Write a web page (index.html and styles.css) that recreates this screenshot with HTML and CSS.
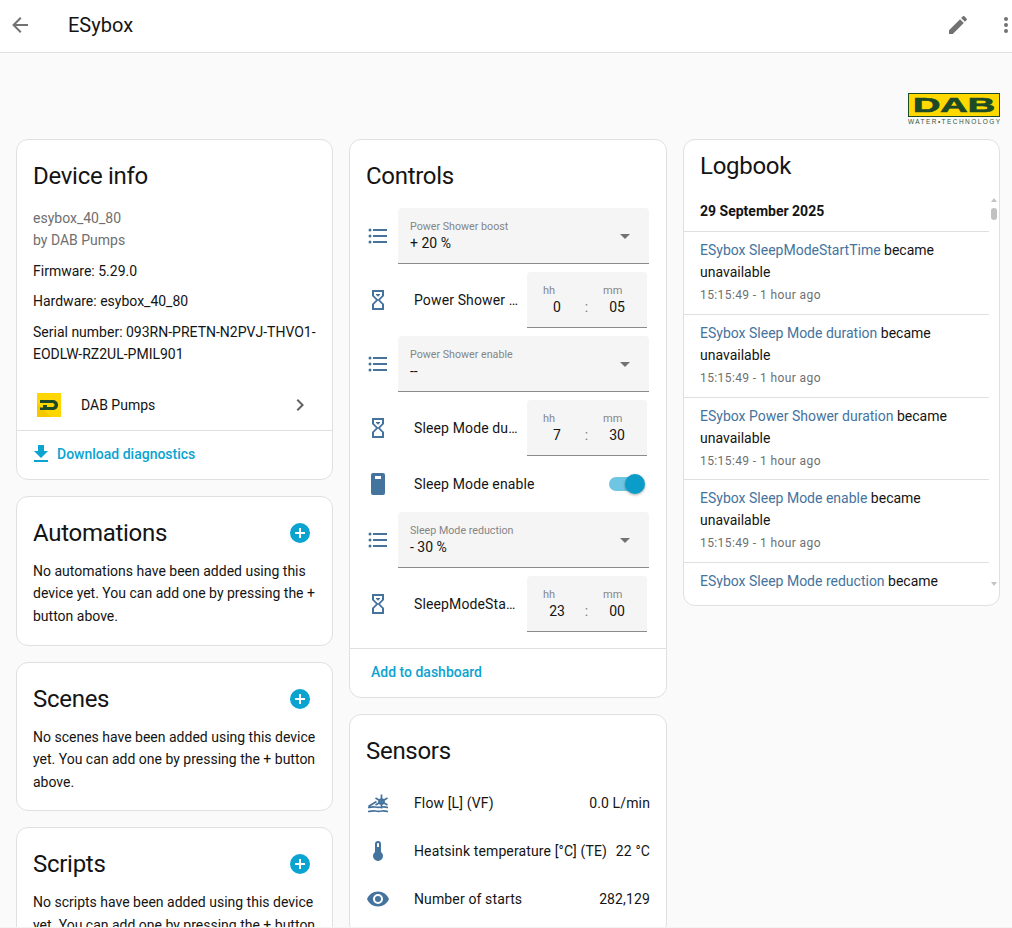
FILE: index.html
```html
<!DOCTYPE html>
<html lang="en">
<head>
  <meta charset="UTF-8">
  <title>ESybox</title>
  <link rel="stylesheet" href="styles.css">
</head>
<body>
  <header class="topbar">
    <svg class="top-icon back" viewBox="0 0 24 24"><path d="M20,11V13H8L13.5,18.5L12.08,19.92L4.16,12L12.08,4.08L13.5,5.5L8,11H20Z"/></svg>
    <h1>ESybox</h1>
    <svg class="top-icon edit" viewBox="0 0 24 24"><path d="M20.71,7.04C21.1,6.65 21.1,6 20.71,5.63L18.37,3.29C18,2.9 17.35,2.9 16.96,3.29L15.12,5.12L18.87,8.87M3,17.25V21H6.75L17.81,9.93L14.06,6.18L3,17.25Z"/></svg>
    <svg class="top-icon more" viewBox="0 0 24 24"><path d="M12,16A2,2 0 0,1 14,18A2,2 0 0,1 12,20A2,2 0 0,1 10,18A2,2 0 0,1 12,16M12,10A2,2 0 0,1 14,12A2,2 0 0,1 12,14A2,2 0 0,1 10,12A2,2 0 0,1 12,10M12,4A2,2 0 0,1 14,6A2,2 0 0,1 12,8A2,2 0 0,1 10,6A2,2 0 0,1 12,4Z"/></svg>
  </header>

  <div class="logo-row">
    <svg class="dab-logo" viewBox="0 0 92 31">
      <rect x="0.5" y="0.5" width="91" height="23" fill="#ffd800" stroke="#1d4a26"/>
      <text class="dab-word" x="46" y="19" text-anchor="middle" textLength="82" lengthAdjust="spacingAndGlyphs">DAB</text>
      <text class="dab-sub" x="0" y="30.5" textLength="92">WATER•TECHNOLOGY</text>
    </svg>
  </div>

  <main class="columns">
    <div class="column">
      <section class="card">
        <h2 class="card-title">Device info</h2>
        <div class="device-details">
          <div class="muted">esybox_40_80</div>
          <div class="muted">by DAB Pumps</div>
          <div class="detail">Firmware: 5.29.0</div>
          <div class="detail">Hardware: esybox_40_80</div>
          <div class="detail">Serial number: 093RN-PRETN-N2PVJ-THVO1-EODLW-RZ2UL-PMIL901</div>
        </div>
        <div class="brand-row">
          <span class="brand-logo"><svg viewBox="0 0 24 24"><path class="brand-shade" d="M0,10L14,24H0Z"/><path d="M3,7H15C19,7 21,9 21,12C21,15 19,17 15,17H3V14.5H6V12H10V14H14.5C16.5,14 17.5,13.4 17.5,12C17.5,10.6 16.5,10 14.5,10H3Z"/></svg></span>
          <span class="brand-name">DAB Pumps</span>
          <svg class="chevron" viewBox="0 0 24 24"><path d="M8.59,16.58L13.17,12L8.59,7.41L10,6L16,12L10,18L8.59,16.58Z"/></svg>
        </div>
        <div class="card-actions">
          <a class="link download"><svg viewBox="0 0 24 24"><path d="M5,20H19V18H5M19,9H15V3H9V9H5L12,16L19,9Z"/></svg>Download diagnostics</a>
        </div>
      </section>

      <section class="card">
        <div class="title-row">
          <h2 class="card-title">Automations</h2>
          <svg class="add" viewBox="0 0 24 24"><path d="M17,13H13V17H11V13H7V11H11V7H13V11H17M12,2A10,10 0 0,0 2,12A10,10 0 0,0 12,22A10,10 0 0,0 22,12A10,10 0 0,0 12,2Z"/></svg>
        </div>
        <p class="empty">No automations have been added using this device yet. You can add one by pressing the + button above.</p>
      </section>

      <section class="card">
        <div class="title-row">
          <h2 class="card-title">Scenes</h2>
          <svg class="add" viewBox="0 0 24 24"><path d="M17,13H13V17H11V13H7V11H11V7H13V11H17M12,2A10,10 0 0,0 2,12A10,10 0 0,0 12,22A10,10 0 0,0 22,12A10,10 0 0,0 12,2Z"/></svg>
        </div>
        <p class="empty">No scenes have been added using this device yet. You can add one by pressing the + button above.</p>
      </section>

      <section class="card">
        <div class="title-row">
          <h2 class="card-title">Scripts</h2>
          <svg class="add" viewBox="0 0 24 24"><path d="M17,13H13V17H11V13H7V11H11V7H13V11H17M12,2A10,10 0 0,0 2,12A10,10 0 0,0 12,22A10,10 0 0,0 22,12A10,10 0 0,0 12,2Z"/></svg>
        </div>
        <p class="empty">No scripts have been added using this device yet. You can add one by pressing the + button above.</p>
      </section>
    </div>

    <div class="column">
      <section class="card">
        <h2 class="card-title">Controls</h2>
        <div class="entities">
          <div class="entity">
            <svg class="state-icon" viewBox="0 0 24 24"><path d="M7,5H21V7H7V5M7,13V11H21V13H7M4,4.5A1.5,1.5 0 0,1 5.5,6A1.5,1.5 0 0,1 4,7.5A1.5,1.5 0 0,1 2.5,6A1.5,1.5 0 0,1 4,4.5M4,10.5A1.5,1.5 0 0,1 5.5,12A1.5,1.5 0 0,1 4,13.5A1.5,1.5 0 0,1 2.5,12A1.5,1.5 0 0,1 4,10.5M7,19V17H21V19H7M4,16.5A1.5,1.5 0 0,1 5.5,18A1.5,1.5 0 0,1 4,19.5A1.5,1.5 0 0,1 2.5,18A1.5,1.5 0 0,1 4,16.5Z"/></svg>
            <div class="select">
              <div>
                <div class="select-label">Power Shower boost</div>
                <div class="select-value">+ 20 %</div>
              </div>
              <svg class="arrow" viewBox="0 0 24 24"><path d="M7,10L12,15L17,10H7Z"/></svg>
            </div>
          </div>
          <div class="entity">
            <svg class="state-icon" viewBox="0 0 24 24"><path d="M6,2H18V8L14,12L18,16V22H6V16L10,12L6,8V2M16,16.5L12,12.5L8,16.5V20H16V16.5M12,11.5L16,7.5V4H8V7.5L12,11.5M10,6H14V6.75L12,8.75L10,6.75V6Z"/></svg>
            <span class="entity-name">Power Shower duration</span>
            <div class="time-box">
              <div class="time-field"><label>hh</label><span>0</span></div>
              <span class="time-colon">:</span>
              <div class="time-field"><label>mm</label><span>05</span></div>
            </div>
          </div>
          <div class="entity">
            <svg class="state-icon" viewBox="0 0 24 24"><path d="M7,5H21V7H7V5M7,13V11H21V13H7M4,4.5A1.5,1.5 0 0,1 5.5,6A1.5,1.5 0 0,1 4,7.5A1.5,1.5 0 0,1 2.5,6A1.5,1.5 0 0,1 4,4.5M4,10.5A1.5,1.5 0 0,1 5.5,12A1.5,1.5 0 0,1 4,13.5A1.5,1.5 0 0,1 2.5,12A1.5,1.5 0 0,1 4,10.5M7,19V17H21V19H7M4,16.5A1.5,1.5 0 0,1 5.5,18A1.5,1.5 0 0,1 4,19.5A1.5,1.5 0 0,1 2.5,18A1.5,1.5 0 0,1 4,16.5Z"/></svg>
            <div class="select">
              <div>
                <div class="select-label">Power Shower enable</div>
                <div class="select-value">--</div>
              </div>
              <svg class="arrow" viewBox="0 0 24 24"><path d="M7,10L12,15L17,10H7Z"/></svg>
            </div>
          </div>
          <div class="entity">
            <svg class="state-icon" viewBox="0 0 24 24"><path d="M6,2H18V8L14,12L18,16V22H6V16L10,12L6,8V2M16,16.5L12,12.5L8,16.5V20H16V16.5M12,11.5L16,7.5V4H8V7.5L12,11.5M10,6H14V6.75L12,8.75L10,6.75V6Z"/></svg>
            <span class="entity-name">Sleep Mode duration</span>
            <div class="time-box">
              <div class="time-field"><label>hh</label><span>7</span></div>
              <span class="time-colon">:</span>
              <div class="time-field"><label>mm</label><span>30</span></div>
            </div>
          </div>
          <div class="entity entity-short">
            <svg class="state-icon" viewBox="0 0 24 24"><path d="M7,1H17A2,2 0 0,1 19,3V21A2,2 0 0,1 17,23H7A2,2 0 0,1 5,21V3A2,2 0 0,1 7,1M9,4V7H15V4H9Z"/></svg>
            <span class="entity-name">Sleep Mode enable</span>
            <span class="switch"><span class="switch-thumb"></span></span>
          </div>
          <div class="entity">
            <svg class="state-icon" viewBox="0 0 24 24"><path d="M7,5H21V7H7V5M7,13V11H21V13H7M4,4.5A1.5,1.5 0 0,1 5.5,6A1.5,1.5 0 0,1 4,7.5A1.5,1.5 0 0,1 2.5,6A1.5,1.5 0 0,1 4,4.5M4,10.5A1.5,1.5 0 0,1 5.5,12A1.5,1.5 0 0,1 4,13.5A1.5,1.5 0 0,1 2.5,12A1.5,1.5 0 0,1 4,10.5M7,19V17H21V19H7M4,16.5A1.5,1.5 0 0,1 5.5,18A1.5,1.5 0 0,1 4,19.5A1.5,1.5 0 0,1 2.5,18A1.5,1.5 0 0,1 4,16.5Z"/></svg>
            <div class="select">
              <div>
                <div class="select-label">Sleep Mode reduction</div>
                <div class="select-value">- 30 %</div>
              </div>
              <svg class="arrow" viewBox="0 0 24 24"><path d="M7,10L12,15L17,10H7Z"/></svg>
            </div>
          </div>
          <div class="entity">
            <svg class="state-icon" viewBox="0 0 24 24"><path d="M6,2H18V8L14,12L18,16V22H6V16L10,12L6,8V2M16,16.5L12,12.5L8,16.5V20H16V16.5M12,11.5L16,7.5V4H8V7.5L12,11.5M10,6H14V6.75L12,8.75L10,6.75V6Z"/></svg>
            <span class="entity-name">SleepModeStartTime</span>
            <div class="time-box">
              <div class="time-field"><label>hh</label><span>23</span></div>
              <span class="time-colon">:</span>
              <div class="time-field"><label>mm</label><span>00</span></div>
            </div>
          </div>
        </div>
        <div class="card-actions">
          <a class="link">Add to dashboard</a>
        </div>
      </section>

      <section class="card">
        <h2 class="card-title">Sensors</h2>
        <div class="entities">
          <div class="entity entity-short">
            <svg class="state-icon flow-icon" viewBox="0 0 24 24"><circle cx="15.5" cy="10.5" r="2.5"/><path d="M15.5,3.5V17.5M9.5,7L21.5,14M21.5,7L9.5,14M2.5,15.5L10.5,10.5M2,16.5C5,16.5 7,15.5 9,16C11,16.5 14,16.5 16,16C18,15.5 20,16.5 22,16.5M2,20.5C5,20.5 7,19.5 9,20C11,20.5 14,20.5 16,20C18,19.5 20,20.5 22,20.5"/></svg>
            <span class="entity-name">Flow [L] (VF)</span>
            <span class="state-value">0.0 L/min</span>
          </div>
          <div class="entity entity-short">
            <svg class="state-icon" viewBox="0 0 24 24"><path d="M15 13V5A3 3 0 0 0 9 5V13A5 5 0 1 0 15 13M12 4A1 1 0 0 1 13 5V8H11V5A1 1 0 0 1 12 4Z"/></svg>
            <span class="entity-name">Heatsink temperature [°C] (TE)</span>
            <span class="state-value">22 °C</span>
          </div>
          <div class="entity entity-short">
            <svg class="state-icon" viewBox="0 0 24 24"><path d="M12,9A3,3 0 0,0 9,12A3,3 0 0,0 12,15A3,3 0 0,0 15,12A3,3 0 0,0 12,9M12,17A5,5 0 0,1 7,12A5,5 0 0,1 12,7A5,5 0 0,1 17,12A5,5 0 0,1 12,17M12,4.5C7,4.5 2.73,7.61 1,12C2.73,16.39 7,19.5 12,19.5C17,19.5 21.27,16.39 23,12C21.27,7.61 17,4.5 12,4.5Z"/></svg>
            <span class="entity-name">Number of starts</span>
            <span class="state-value">282,129</span>
          </div>
        </div>
      </section>
    </div>

    <div class="column">
      <section class="card">
        <h2 class="card-title logbook-title">Logbook</h2>
        <div class="logbook-body">
          <div class="logbook-list">
            <div class="log-date">29 September 2025</div>
            <div class="log-entry">
              <div class="log-text"><a>ESybox SleepModeStartTime</a> became unavailable</div>
              <div class="log-time">15:15:49 - 1 hour ago</div>
            </div>
            <div class="log-entry">
              <div class="log-text"><a>ESybox Sleep Mode duration</a> became unavailable</div>
              <div class="log-time">15:15:49 - 1 hour ago</div>
            </div>
            <div class="log-entry">
              <div class="log-text"><a>ESybox Power Shower duration</a> became unavailable</div>
              <div class="log-time">15:15:49 - 1 hour ago</div>
            </div>
            <div class="log-entry">
              <div class="log-text"><a>ESybox Sleep Mode enable</a> became unavailable</div>
              <div class="log-time">15:15:49 - 1 hour ago</div>
            </div>
            <div class="log-entry">
              <div class="log-text"><a>ESybox Sleep Mode reduction</a> became unavailable</div>
              <div class="log-time">15:15:49 - 1 hour ago</div>
            </div>
          </div>
          <div class="scrollbar">
            <span class="scroll-up"></span>
            <span class="scroll-thumb"></span>
            <span class="scroll-down"></span>
          </div>
        </div>
      </section>
    </div>
  </main>
  <div class="bottom-edge"></div>
</body>
</html>
```

FILE: styles.css
```css
* {
  box-sizing: border-box;
}

html, body {
  height: 928px;
  overflow: hidden;
}

body {
  margin: 0;
  background-color: #fafafa;
  color: #141414;
  font-family: Roboto, "Liberation Sans", sans-serif;
  font-size: 14px;
  line-height: 22px;
}

.topbar {
  display: flex;
  align-items: center;
  height: 53px;
  padding-bottom: 3px;
  background-color: #fff;
  border-bottom: 1px solid #e0e0e0;
}

.topbar h1 {
  flex: 1;
  margin: 0 0 0 36px;
  font-size: 20px;
  font-weight: 400;
  line-height: 48px;
}

.top-icon {
  flex: none;
  width: 24px;
  height: 24px;
  fill: #727272;
}

.back {
  margin-left: 8px;
}

.edit {
  margin-right: 1px;
}

.more {
  margin: 0 -6px 0 23px;
}

.logo-row {
  display: flex;
  justify-content: flex-end;
  height: 86px;
  padding: 40px 12px 0 0;
}

.dab-logo {
  width: 92px;
  height: 31px;
}

.dab-word {
  fill: #1d4a26;
  stroke: #1d4a26;
  stroke-width: 0.7px;
  font-family: "Liberation Sans", sans-serif;
  font-size: 20px;
  font-weight: 700;
}

.dab-sub {
  fill: #35563c;
  font-family: "Liberation Sans", sans-serif;
  font-size: 6.5px;
}

.columns {
  display: grid;
  grid-template-columns: 317px 318px 317px;
  gap: 16px;
  padding: 0 12px 0 16px;
  align-items: start;
}

.column {
  display: flex;
  flex-direction: column;
  gap: 16px;
}

.card {
  background-color: #fff;
  border: 1px solid #e0e0e0;
  border-radius: 12px;
}

.card-title {
  margin: 0;
  padding: 16px 16px 0;
  font-size: 24px;
  font-weight: 400;
  line-height: 40px;
  letter-spacing: -0.012em;
}

.title-row {
  display: flex;
  align-items: center;
  justify-content: space-between;
  padding-right: 20px;
}

.add {
  width: 24px;
  height: 24px;
  margin-top: 16px;
  fill: #0ba3d0;
}

.empty {
  margin: 0;
  padding: 7px 16px 17.4px;
  line-height: 22.4px;
}

.device-details {
  padding: 11px 16px 0;
}

.muted {
  color: #6f6f6f;
}

.detail {
  margin-top: 8.6px;
}

.brand-row {
  display: flex;
  align-items: center;
  height: 49.3px;
  margin-top: 16px;
  padding: 0 20px;
}

.brand-logo {
  display: flex;
  width: 24px;
  height: 24px;
  background-color: #ffd600;
}

.brand-logo svg {
  width: 24px;
  height: 24px;
  fill: #1d4a26;
}

.brand-logo .brand-shade {
  fill: #f5c800;
}

.brand-name {
  flex: 1;
  margin-left: 20px;
}

.chevron {
  width: 24px;
  height: 24px;
  fill: #636363;
}

.card-actions {
  border-top: 1px solid #e0e0e0;
  padding: 12px 16px 14px;
}

.link {
  display: flex;
  align-items: center;
  height: 22px;
  padding-left: 5px;
  color: #0ba3d0;
  font-weight: 500;
}

.download {
  padding-left: 0;
}

.download svg {
  width: 24px;
  height: 24px;
  margin: 0 4px 0 -4px;
  fill: #0ba3d0;
}

.entities {
  display: flex;
  flex-direction: column;
  gap: 8px;
  padding: 12px 17px 16px 16px;
}

.entity {
  display: flex;
  align-items: center;
  height: 56px;
}

.entity-short {
  height: 40px;
}

.state-icon {
  flex: none;
  width: 24px;
  height: 24px;
  fill: #44739e;
}

.flow-icon {
  fill: none;
  stroke: #44739e;
  stroke-width: 1.7;
}

.entity-name {
  flex: 1;
  min-width: 0;
  margin-left: 24px;
  padding-right: 8px;
  overflow: hidden;
  white-space: nowrap;
  text-overflow: ellipsis;
  letter-spacing: 0.13px;
}

.state-value {
  flex: none;
  margin-right: -1px;
  text-align: right;
  letter-spacing: 0.13px;
}

.select {
  flex: 1;
  display: flex;
  align-items: center;
  justify-content: space-between;
  height: 56px;
  margin-left: 8px;
  padding: 2px 12px 0;
  background-color: #f5f5f5;
  border-bottom: 1px solid #8b8b8b;
  border-radius: 4px 4px 0 0;
}

.select-label {
  color: #858585;
  font-size: 10.7px;
  line-height: 13px;
}

.select-value {
  line-height: 20px;
}

.arrow {
  width: 24px;
  height: 24px;
  margin-top: -2px;
  fill: #727272;
}

.time-box {
  flex: none;
  display: flex;
  align-items: flex-end;
  width: 120px;
  height: 56px;
  margin-right: 2px;
  padding: 0 16px 10px;
  background-color: #f5f5f5;
  border-bottom: 1px solid #8b8b8b;
  border-radius: 4px 4px 0 0;
}

.time-field {
  display: flex;
  flex-direction: column;
  width: 28px;
}

.time-field label {
  color: #858585;
  font-size: 11px;
  line-height: 12px;
}

.time-field span {
  text-align: center;
  line-height: 20px;
}

.time-colon {
  flex: 1;
  margin-right: 1px;
  color: #7d7d7d;
  text-align: center;
  line-height: 20px;
}

.switch {
  position: relative;
  flex: none;
  width: 35px;
  height: 14px;
  margin-right: 5px;
  background-color: #6fc6e3;
  border-radius: 7px;
}

.switch-thumb {
  position: absolute;
  top: -3px;
  right: -1px;
  width: 20px;
  height: 20px;
  background-color: #0b9cc9;
  border-radius: 50%;
  box-shadow: 0 1px 3px rgba(0, 0, 0, 0.35);
}

.logbook-title {
  padding-top: 6px;
}

.logbook-body {
  display: flex;
  height: 392px;
  margin: 10px 0 17px;
  overflow: hidden;
}

.logbook-list {
  flex: 1;
  min-width: 0;
  overflow: hidden;
}

.log-date {
  padding: 4px 16px 9px;
  font-weight: 700;
  border-bottom: 1px solid #e0e0e0;
}

.log-entry {
  padding: 7px 16px 7.75px;
  border-bottom: 1px solid #e0e0e0;
}

.log-text a {
  color: #44739e;
}

.log-time {
  margin-top: 1px;
  color: #6f6f6f;
  font-size: 12px;
  line-height: 22px;
  letter-spacing: 0.4px;
}

.scrollbar {
  flex: none;
  display: flex;
  flex-direction: column;
  align-items: center;
  width: 10px;
}

.scroll-up, .scroll-down {
  width: 0;
  height: 0;
  border-left: 3.5px solid transparent;
  border-right: 3.5px solid transparent;
}

.scroll-up {
  margin-top: 2px;
  border-bottom: 4px solid #c4c4c4;
}

.scroll-thumb {
  width: 6px;
  height: 12px;
  margin-top: 6px;
  background-color: #c1c1c1;
  border-radius: 3px;
}

.scroll-down {
  margin-top: auto;
  margin-bottom: 2px;
  border-top: 4px solid #c4c4c4;
}

.bottom-edge {
  position: fixed;
  left: 0;
  right: 0;
  bottom: 0;
  height: 1px;
  background-color: #f3f3f3;
}
```
